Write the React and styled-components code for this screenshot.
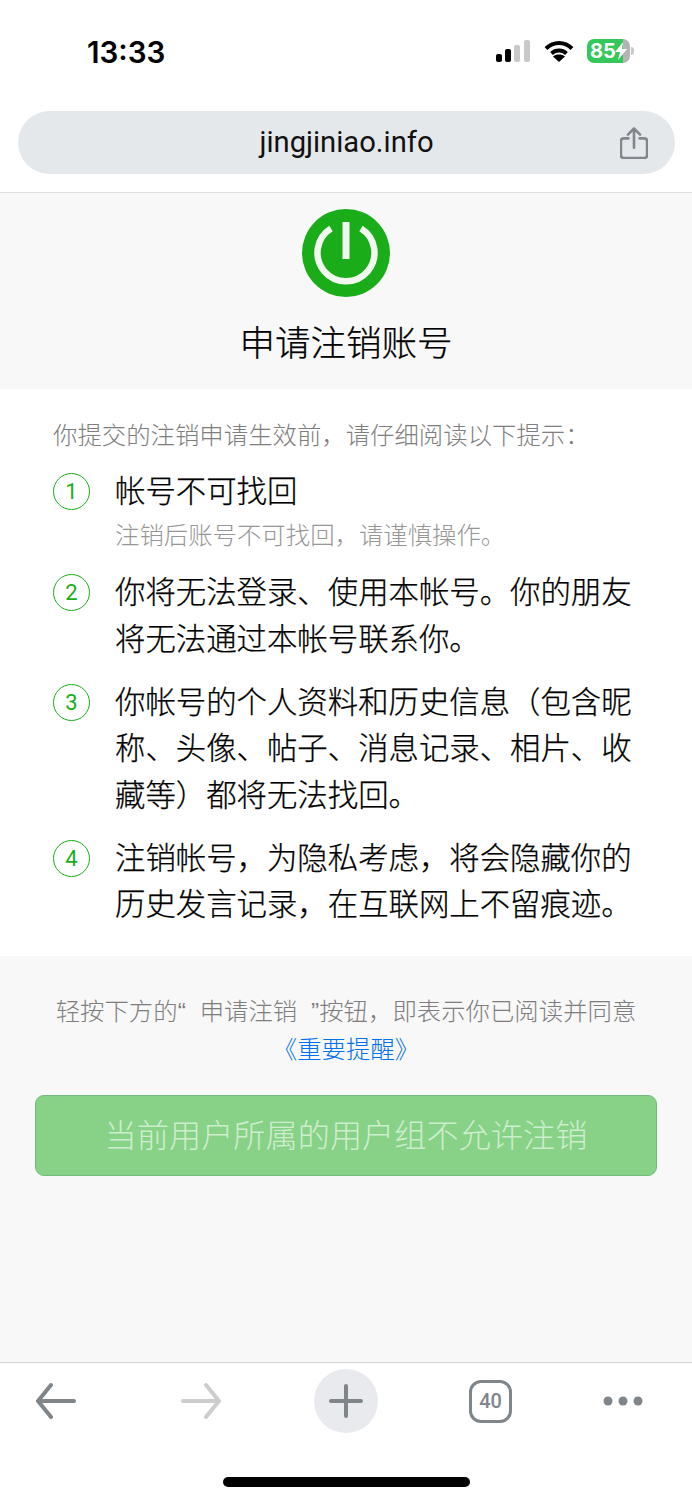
import styled, { createGlobalStyle } from "styled-components"

const GlobalStyle = createGlobalStyle`
  html, body {
    margin: 0;
    padding: 0;
    background: #fff;
  }
  * {
    box-sizing: border-box;
  }
`

const Phone = styled.div`
  width: 692px;
  height: 1500px;
  display: flex;
  flex-direction: column;
  overflow: hidden;
  font-family: "Noto Sans CJK SC", "Liberation Sans", sans-serif;
  font-weight: 300;
  text-spacing-trim: space-all;
`

const BrowserTop = styled.header`
  height: 193px;
  flex: none;
  background: #fff;
  border-bottom: 1px solid #dfdfdf;
`

const StatusBar = styled.div`
  height: 111px;
  padding: 30px 62px 0 87px;
  display: flex;
  justify-content: space-between;
  align-items: flex-start;
`

const Time = styled.span`
  font-family: Inter, "Liberation Sans", sans-serif;
  font-size: 29.6px;
  line-height: 44px;
  font-weight: 600;
  color: #000;
`

const StatusIcons = styled.div`
  display: flex;
  align-items: center;
  gap: 13px;
  height: 44px;
  margin-top: -1px;
`

const Battery = styled.div`
  position: relative;
  width: 43px;
  height: 24px;
  border-radius: 7px;
  background: linear-gradient(to right, #34c759 0 36px, #b4b4b4 36px);
  color: #fff;
  font-family: Inter, "Liberation Sans", sans-serif;
  font-size: 20px;
  font-weight: 700;
  line-height: 24px;
  padding-left: 3px;

  &::after {
    content: "";
    position: absolute;
    right: -4px;
    top: 8px;
    width: 3px;
    height: 8px;
    border-radius: 0 3px 3px 0;
    background: #c8c8c8;
  }
`

const Bolt = styled.svg`
  position: absolute;
  left: 28px;
  top: 3px;
`

const AddressBar = styled.div`
  position: relative;
  margin: 0 17px 0 18px;
  height: 63px;
  padding-bottom: 2px;
  border-radius: 32px;
  background: #e5e8eb;
  display: flex;
  align-items: center;
  justify-content: center;
  font-family: Roboto, "Liberation Sans", sans-serif;
  font-size: 29.2px;
  font-weight: 400;
  color: #111;
`

const ShareIcon = styled.svg`
  position: absolute;
  right: 27px;
  top: 16px;
`

const Main = styled.main`
  flex: 1;
  background: #f8f8f8;
  display: flex;
  flex-direction: column;
`

const Hero = styled.section`
  height: 196px;
  flex: none;
  display: flex;
  flex-direction: column;
  align-items: center;
  padding-top: 16px;
`

const Title = styled.h1`
  margin: 18px 0 0;
  font-size: 35.5px;
  line-height: 52px;
  font-weight: 300;
  color: #000;
  -webkit-text-stroke: 0.25px #000;
`

const Notice = styled.section`
  height: 567px;
  flex: none;
  background: #fff;
  padding: 27px 53px 0;
`

const Intro = styled.p`
  margin: 0;
  font-size: 24.4px;
  line-height: 36px;
  color: #7e7e7e;
  white-space: nowrap;
`

const Steps = styled.ol`
  list-style: none;
  margin: 14px 0 0;
  padding: 0;
  display: flex;
  flex-direction: column;
  gap: 16.5px;
`

const Step = styled.li`
  display: flex;
  gap: 25px;
`

const StepNumber = styled.span`
  flex: none;
  width: 37px;
  height: 37px;
  margin-top: 7px;
  border: 1px solid #1aad19;
  border-radius: 50%;
  color: #1aad19;
  font-family: Roboto, "Liberation Sans", sans-serif;
  font-size: 22px;
  font-weight: 400;
  display: flex;
  align-items: center;
  justify-content: center;
`

const StepBody = styled.div`
  width: 520px;
`

const StepText = styled.div`
  font-size: 30.4px;
  line-height: 46.5px;
  color: #000;
  white-space: nowrap;
  -webkit-text-stroke: 0.25px #000;
`

const StepHint = styled.div`
  font-size: 24.4px;
  line-height: 34px;
  color: #979797;
  margin-top: 4px;
`

const Footer = styled.section`
  flex: 1;
  padding: 35px 35px 0;
  text-align: center;
`

const Agreement = styled.p`
  margin: 0;
  font-size: 24.4px;
  line-height: 38px;
  color: #7e7e7e;
  white-space: nowrap;
`

const Quote = styled.span`
  display: inline-block;
  width: 22px;
  line-height: 1;
  font-family: "Liberation Sans", sans-serif;
  font-weight: 400;
  text-align: ${props => props.$align};
`

const AgreementLink = styled.a`
  color: #0070ee;
  display: block;
`

const DisabledButton = styled.div`
  margin: 28px 0 0;
  height: 81px;
  width: 622px;
  padding-bottom: 6px;
  border: 1px solid #72b97a;
  border-radius: 9px;
  background: #88d288;
  color: rgba(255, 255, 255, 0.6);
  font-size: 32.2px;
  display: flex;
  align-items: center;
  justify-content: center;
`

const BrowserBottom = styled.footer`
  height: 138px;
  flex: none;
  background: #fff;
  border-top: 1px solid #d2d2d2;
  position: relative;
`

const ToolRow = styled.nav`
  display: grid;
  grid-template-columns: 145px 133px 155px 134px 40px;
  justify-items: start;
  align-items: center;
  height: 64px;
  margin-top: 6px;
  padding-left: 36px;
`

const PlusCircle = styled.div`
  width: 64px;
  height: 64px;
  border-radius: 50%;
  background: #e9eaee;
  display: flex;
  align-items: center;
  justify-content: center;
`

const TabCount = styled.div`
  width: 43px;
  height: 43px;
  border: 3.5px solid #7f8589;
  border-radius: 12px;
  color: #7f8589;
  font-family: Roboto, "Liberation Sans", sans-serif;
  font-size: 20px;
  font-weight: 500;
  display: flex;
  align-items: center;
  justify-content: center;
`

const HomeIndicator = styled.div`
  position: absolute;
  left: 223px;
  bottom: 13px;
  width: 247px;
  height: 10px;
  border-radius: 5px;
  background: #000;
`

const Signal = () => (
  <svg width="35" height="22" viewBox="0 0 35 22">
    <rect x="0" y="14" width="6" height="8" rx="2" fill="#000" />
    <rect x="9" y="9" width="6" height="13" rx="2" fill="#000" />
    <rect x="18" y="5" width="6" height="17" rx="2" fill="#c9c9c9" />
    <rect x="28" y="0" width="6" height="22" rx="2" fill="#c9c9c9" />
  </svg>
)

const Wifi = () => (
  <svg width="30" height="22" viewBox="0 0 30 22" fill="none" stroke="#000" strokeWidth="4">
    <path d="M2 8.5C9.5 1 20.5 1 28 8.5" />
    <path d="M7.5 13.5C11.8 9.6 18.2 9.6 22.5 13.5" />
    <path d="M15 22l-6-5.6c3.4-2.6 8.6-2.6 12 0z" fill="#000" stroke="none" />
  </svg>
)

const PowerLogo = () => (
  <svg width="88" height="88" viewBox="0 0 88 88">
    <circle cx="44" cy="44" r="44" fill="#1aad19" />
    <path d="M29 19.5a28.5 28.5 0 1 0 30 0" fill="none" stroke="#f0f8f0" strokeWidth="6.5" />
    <rect x="40.5" y="13" width="7" height="37" fill="#f0f8f0" />
  </svg>
)

const steps = [
  { lines: ["帐号不可找回"], hint: "注销后账号不可找回，请谨慎操作。" },
  { lines: ["你将无法登录、使用本帐号。你的朋友", "将无法通过本帐号联系你。"] },
  { lines: ["你帐号的个人资料和历史信息（包含昵", "称、头像、帖子、消息记录、相片、收", "藏等）都将无法找回。"] },
  { lines: ["注销帐号，为隐私考虑，将会隐藏你的", "历史发言记录，在互联网上不留痕迹。"] },
]

export default function App() {
  return (
    <Phone>
      <GlobalStyle />
      <BrowserTop>
        <StatusBar>
          <Time>13:33</Time>
          <StatusIcons>
            <Signal />
            <Wifi />
            <Battery>
              85
              <Bolt width="12" height="18" viewBox="0 0 12 18">
                <path d="M8 0L0 10h5l-2 8 9-11H7z" fill="#fff" />
              </Bolt>
            </Battery>
          </StatusIcons>
        </StatusBar>
        <AddressBar>
          jingjiniao.info
          <ShareIcon width="28" height="32" viewBox="0 0 30 34" fill="none" stroke="#80868b" strokeWidth="2.8" strokeLinecap="round" strokeLinejoin="round">
            <path d="M9 12H4a3 3 0 0 0-3 3v15a3 3 0 0 0 3 3h22a3 3 0 0 0 3-3V15a3 3 0 0 0-3-3h-5" />
            <path d="M15 22V2M8.500 8L15 1.500 21.500 8" />
          </ShareIcon>
        </AddressBar>
      </BrowserTop>

      <Main>
        <Hero>
          <PowerLogo />
          <Title>申请注销账号</Title>
        </Hero>

        <Notice>
          <Intro>你提交的注销申请生效前，请仔细阅读以下提示：</Intro>
          <Steps>
            {steps.map((step, i) => (
              <Step key={i}>
                <StepNumber>{i + 1}</StepNumber>
                <StepBody>
                  {step.lines.map(line => (
                    <StepText key={line}>{line}</StepText>
                  ))}
                  {step.hint && <StepHint>{step.hint}</StepHint>}
                </StepBody>
              </Step>
            ))}
          </Steps>
        </Notice>

        <Footer>
          <Agreement>
            轻按下方的<Quote $align="left">“</Quote>申请注销<Quote $align="right">”</Quote>按钮，即表示你已阅读并同意
            <AgreementLink>《重要提醒》</AgreementLink>
          </Agreement>
          <DisabledButton>当前用户所属的用户组不允许注销</DisabledButton>
        </Footer>
      </Main>

      <BrowserBottom>
        <ToolRow>
          <svg width="40" height="38" viewBox="0 0 40 38" fill="none" stroke="#7f8589" strokeWidth="4" strokeLinecap="round" strokeLinejoin="round">
            <path d="M38 19H3M15 3L2 19l13 16" />
          </svg>
          <svg width="40" height="38" viewBox="0 0 40 38" fill="none" stroke="#cdcdcd" strokeWidth="4" strokeLinecap="round" strokeLinejoin="round">
            <path d="M2 19h35M25 3l13 16-13 16" />
          </svg>
          <PlusCircle>
            <svg width="34" height="34" viewBox="0 0 34 34" stroke="#7f8589" strokeWidth="4" strokeLinecap="round">
              <path d="M17 2v30M2 17h30" />
            </svg>
          </PlusCircle>
          <TabCount>40</TabCount>
          <svg width="40" height="12" viewBox="0 0 40 12" fill="#7f8589">
            <circle cx="5" cy="6" r="4.500" />
            <circle cx="20" cy="6" r="4.500" />
            <circle cx="35" cy="6" r="4.500" />
          </svg>
        </ToolRow>
        <HomeIndicator />
      </BrowserBottom>
    </Phone>
  )
}
